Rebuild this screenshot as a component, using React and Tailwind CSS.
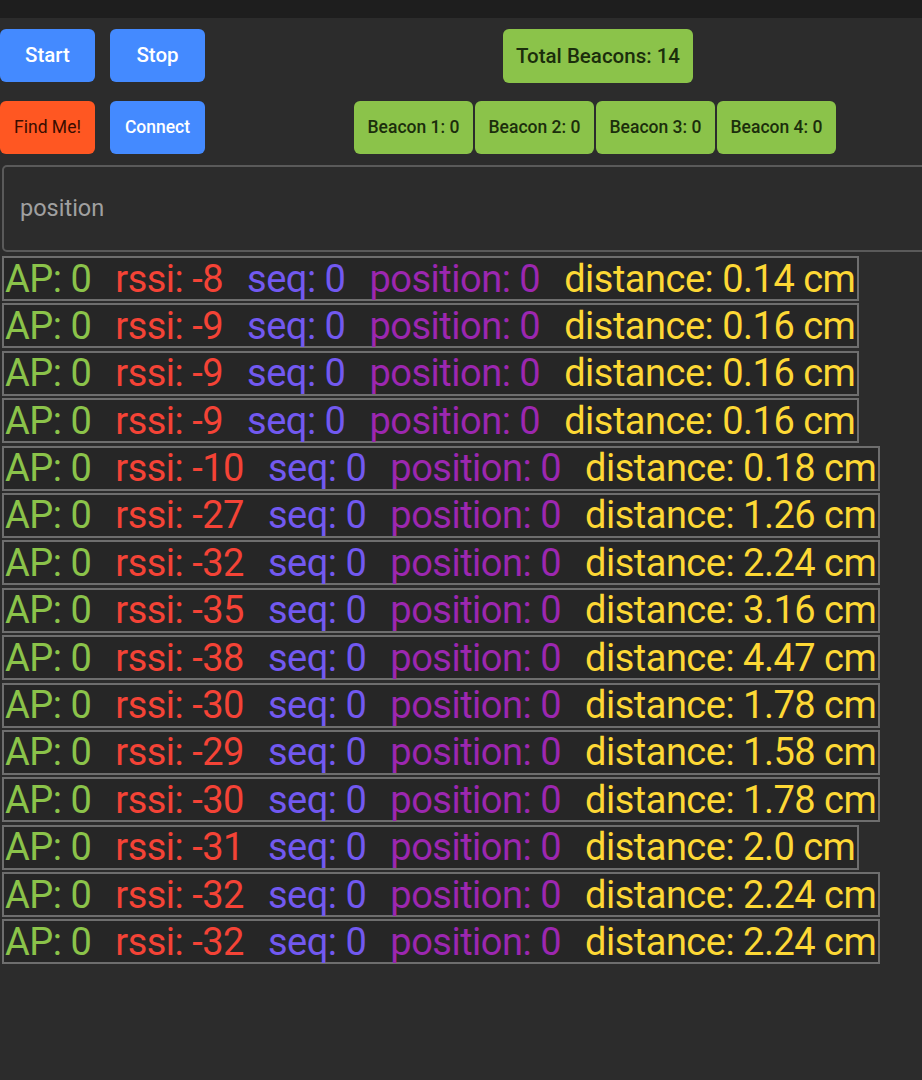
import React from 'react';

const readings = [
  { rssi: -8, dist: '0.14' },
  { rssi: -9, dist: '0.16' },
  { rssi: -9, dist: '0.16' },
  { rssi: -9, dist: '0.16' },
  { rssi: -10, dist: '0.18' },
  { rssi: -27, dist: '1.26' },
  { rssi: -32, dist: '2.24' },
  { rssi: -35, dist: '3.16' },
  { rssi: -38, dist: '4.47' },
  { rssi: -30, dist: '1.78' },
  { rssi: -29, dist: '1.58' },
  { rssi: -30, dist: '1.78' },
  { rssi: -31, dist: '2.0' },
  { rssi: -32, dist: '2.24' },
  { rssi: -32, dist: '2.24' },
];

function Btn({ children, className }) {
  return (
    <div className={`flex items-center justify-center rounded-[6px] font-medium ${className}`}>
      {children}
    </div>
  );
}

function Reading({ r }) {
  return (
    <div className="self-start flex items-center h-[45px] border-2 border-[#6e6e6e] bg-[#262626] pl-[1px] pr-[2px] gap-[24px] text-[38px] leading-none tracking-[-0.5px]">
      <span className="text-[#8bc34a]">AP: 0</span>
      <span className="text-[#f44336]">rssi: {r.rssi}</span>
      <span className="text-[#7259f0]">seq: 0</span>
      <span className="text-[#9c27b0]">position: 0</span>
      <span className="text-[#fdd835]">distance: {r.dist} cm</span>
    </div>
  );
}

export default function App() {
  return (
    <div className="min-h-[1080px] w-[922px] overflow-hidden bg-[#2c2c2c] font-['Roboto',sans-serif]">
      <div className="h-[18px] bg-[#1e1e1e]" />
      <div className="flex mt-[11px]">
        <Btn className="w-[95px] h-[53px] bg-[#448aff] text-white text-[20.5px]">Start</Btn>
        <Btn className="w-[95px] h-[53px] ml-[15px] bg-[#448aff] text-white text-[20.5px]">Stop</Btn>
        <Btn className="w-[190px] h-[54px] ml-[298px] bg-[#8bc34a] text-[#1b2e0c] text-[20.5px]">Total Beacons: 14</Btn>
      </div>
      <div className="flex mt-[18px]">
        <Btn className="w-[95px] h-[53px] bg-[#ff5722] text-[#3a0d00] text-[17.5px] !font-normal">Find Me!</Btn>
        <Btn className="w-[95px] h-[53px] ml-[15px] bg-[#448aff] text-white text-[17.5px]">Connect</Btn>
        <div className="flex gap-[2px] ml-[149px]">
          {[1, 2, 3, 4].map((n) => (
            <Btn key={n} className="w-[119px] h-[53px] bg-[#8bc34a] text-[#1b2e0c] text-[17.5px]">
              Beacon {n}: 0
            </Btn>
          ))}
        </div>
      </div>
      <div className="mt-[11px] ml-[2px] w-[940px] h-[87px] border-2 border-[#5a5a5a] rounded-[5px] flex items-center pl-[16px]">
        <span className="text-[23.5px] text-[#a0a0a0]">position</span>
      </div>
      <div className="flex flex-col gap-[2.4px] mt-[4px] ml-[2px]">
        {readings.map((r, i) => (
          <Reading key={i} r={r} />
        ))}
      </div>
    </div>
  );
}
